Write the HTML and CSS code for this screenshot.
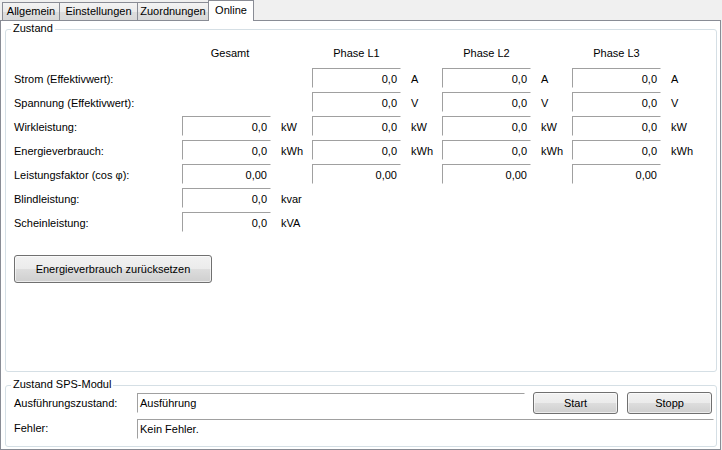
FILE: index.html
```html
<!DOCTYPE html>
<html lang="de">
<head>
<meta charset="utf-8">
<title>Online</title>
<link rel="stylesheet" href="styles.css">
</head>
<body>
<div class="tabs">
  <div class="tab tab-allg">Allgemein</div>
  <div class="tab tab-einst">Einstellungen</div>
  <div class="tab tab-zuord">Zuordnungen</div>
  <div class="tab tab-online active">Online</div>
</div>
<div class="page">
  <div class="group group-main">
    <div class="group-title">Zustand</div>
    <div class="grid">
      <div class="head-spacer"></div>
      <div class="head head-gesamt">Gesamt</div>
      <div class="head">Phase L1</div>
      <div class="head">Phase L2</div>
      <div class="head">Phase L3</div>

      <div class="lbl">Strom (Effektivwert):</div>
      <div class="empty"></div><div class="empty"></div>
      <div class="box">0,0</div><div class="unit">A</div>
      <div class="box">0,0</div><div class="unit">A</div>
      <div class="box">0,0</div><div class="unit">A</div>

      <div class="lbl">Spannung (Effektivwert):</div>
      <div class="empty"></div><div class="empty"></div>
      <div class="box">0,0</div><div class="unit">V</div>
      <div class="box">0,0</div><div class="unit">V</div>
      <div class="box">0,0</div><div class="unit">V</div>

      <div class="lbl">Wirkleistung:</div>
      <div class="box">0,0</div><div class="unit">kW</div>
      <div class="box">0,0</div><div class="unit">kW</div>
      <div class="box">0,0</div><div class="unit">kW</div>
      <div class="box">0,0</div><div class="unit">kW</div>

      <div class="lbl">Energieverbrauch:</div>
      <div class="box">0,0</div><div class="unit">kWh</div>
      <div class="box">0,0</div><div class="unit">kWh</div>
      <div class="box">0,0</div><div class="unit">kWh</div>
      <div class="box">0,0</div><div class="unit">kWh</div>

      <div class="lbl">Leistungsfaktor (cos φ):</div>
      <div class="box">0,00</div><div class="unit"></div>
      <div class="box">0,00</div><div class="unit"></div>
      <div class="box">0,00</div><div class="unit"></div>
      <div class="box">0,00</div><div class="unit"></div>

      <div class="lbl">Blindleistung:</div>
      <div class="box">0,0</div><div class="unit">kvar</div>
      <div class="rest"></div>

      <div class="lbl">Scheinleistung:</div>
      <div class="box">0,0</div><div class="unit">kVA</div>
      <div class="rest"></div>
    </div>
    <button class="btn btn-reset" type="button">Energieverbrauch zurücksetzen</button>
  </div>

  <div class="group group-sps">
    <div class="group-title">Zustand SPS-Modul</div>
    <div class="sps-row sps-row1">
      <div class="sps-lbl">Ausführungszustand:</div>
      <div class="sps-box sps-box1">Ausführung</div>
      <button class="btn btn-small btn-start" type="button">Start</button>
      <button class="btn btn-small btn-stop" type="button">Stopp</button>
    </div>
    <div class="sps-row sps-row2">
      <div class="sps-lbl sps-lbl2">Fehler:</div>
      <div class="sps-box sps-box2">Kein Fehler.</div>
    </div>
  </div>
</div>
</body>
</html>
```
FILE: styles.css
```css
* { box-sizing: border-box; }

html, body {
  margin: 0;
  padding: 0;
  background: #f0f0f0;
}

body {
  font-family: "Liberation Sans", Arial, sans-serif;
  font-size: 11px;
  line-height: 13px;
  color: #000;
  width: 722px;
  height: 450px;
  overflow: hidden;
}

/* ---------- tabs ---------- */
.tabs {
  display: flex;
  align-items: flex-end;
  height: 20px;
  padding-left: 2px;
}

.tab {
  height: 18px;
  border: 1px solid #898c95;
  border-bottom: none;
  background: linear-gradient(#f3f3f3, #ebebeb 50%, #dddddd 51%, #d9d9d9);
  text-align: center;
  padding-top: 2px;
  white-space: nowrap;
}

.tab + .tab { margin-left: -1px; }

.tab-allg { width: 58px; }
.tab-einst { width: 79px; }
.tab-zuord { width: 72px; }

.tab.active {
  width: 46px;
  height: 21px;
  margin-bottom: -1px;
  background: #fff;
  padding-top: 3px;
  position: relative;
  z-index: 1;
}

/* ---------- page ---------- */
.page {
  width: 721px;
  height: 430px;
  border: 1px solid #898c95;
  background: #fff;
  display: flex;
  flex-direction: column;
}

.group {
  border: 1px solid #d5dfe5;
  border-radius: 3px;
  margin-left: 4px;
  margin-right: 3px;
  padding-left: 8px;
}

.group-title {
  width: fit-content;
  background: #fff;
  padding: 0 2px;
  margin-top: -8px;
  margin-left: -3px;
  white-space: nowrap;
}

.group-main {
  margin-top: 8px;
  height: 343px;
}

.group-sps {
  margin-top: 13px;
  height: 62px;
}

/* ---------- measurement grid ---------- */
.grid {
  margin-top: 12px;
  display: grid;
  grid-template-columns: 168px 89px 41px 89px 41px 89px 41px 89px 41px;
  grid-template-rows: 17px repeat(7, 20px);
  row-gap: 4px;
}

.head {
  grid-column: span 2;
  width: 89px;
  text-align: center;
}

.head-gesamt { padding-left: 7px; }

.lbl {
  padding-top: 5px;
  white-space: nowrap;
}

.box {
  height: 20px;
  border-top: 1px solid #a0a0a0;
  border-left: 1px solid #a0a0a0;
  border-right: 1px solid #fff;
  border-bottom: 1px solid #fff;
  text-align: right;
  padding: 4px 3px 0 0;
}

.unit {
  padding-top: 5px;
  padding-left: 10px;
  white-space: nowrap;
}

.rest { grid-column: span 6; }

/* ---------- buttons ---------- */
.btn {
  font-family: inherit;
  font-size: 11px;
  line-height: 13px;
  color: #000;
  border: 1px solid #707070;
  border-radius: 3px;
  background: linear-gradient(#f2f2f2, #ebebeb 50%, #dddddd 51%, #cfcfcf);
  padding: 0;
  margin: 0;
  box-shadow: inset 0 0 0 1px rgba(255,255,255,0.6);
}

.btn-reset {
  display: block;
  width: 198px;
  height: 28px;
  margin-top: 23px;
}

.btn-small {
  width: 85px;
  height: 22px;
}

.btn-start { margin-left: 8px; }
.btn-stop { margin-left: 9px; }

/* ---------- SPS group ---------- */
.sps-row {
  display: flex;
  align-items: flex-start;
}

.sps-row1 { margin-top: 1px; }
.sps-row2 { margin-top: 5px; }

.sps-lbl {
  width: 123px;
  padding-top: 5px;
  white-space: nowrap;
}

.sps-lbl2 { padding-top: 3px; }

.sps-box {
  height: 20px;
  border-top: 1px solid #a0a0a0;
  border-left: 1px solid #a0a0a0;
  border-right: 1px solid #fff;
  border-bottom: 1px solid #fff;
  padding: 3px 0 0 2px;
  white-space: nowrap;
}

.sps-box1 {
  width: 388px;
  margin-top: 1px;
}

.sps-box2 { width: 577px; }
```
